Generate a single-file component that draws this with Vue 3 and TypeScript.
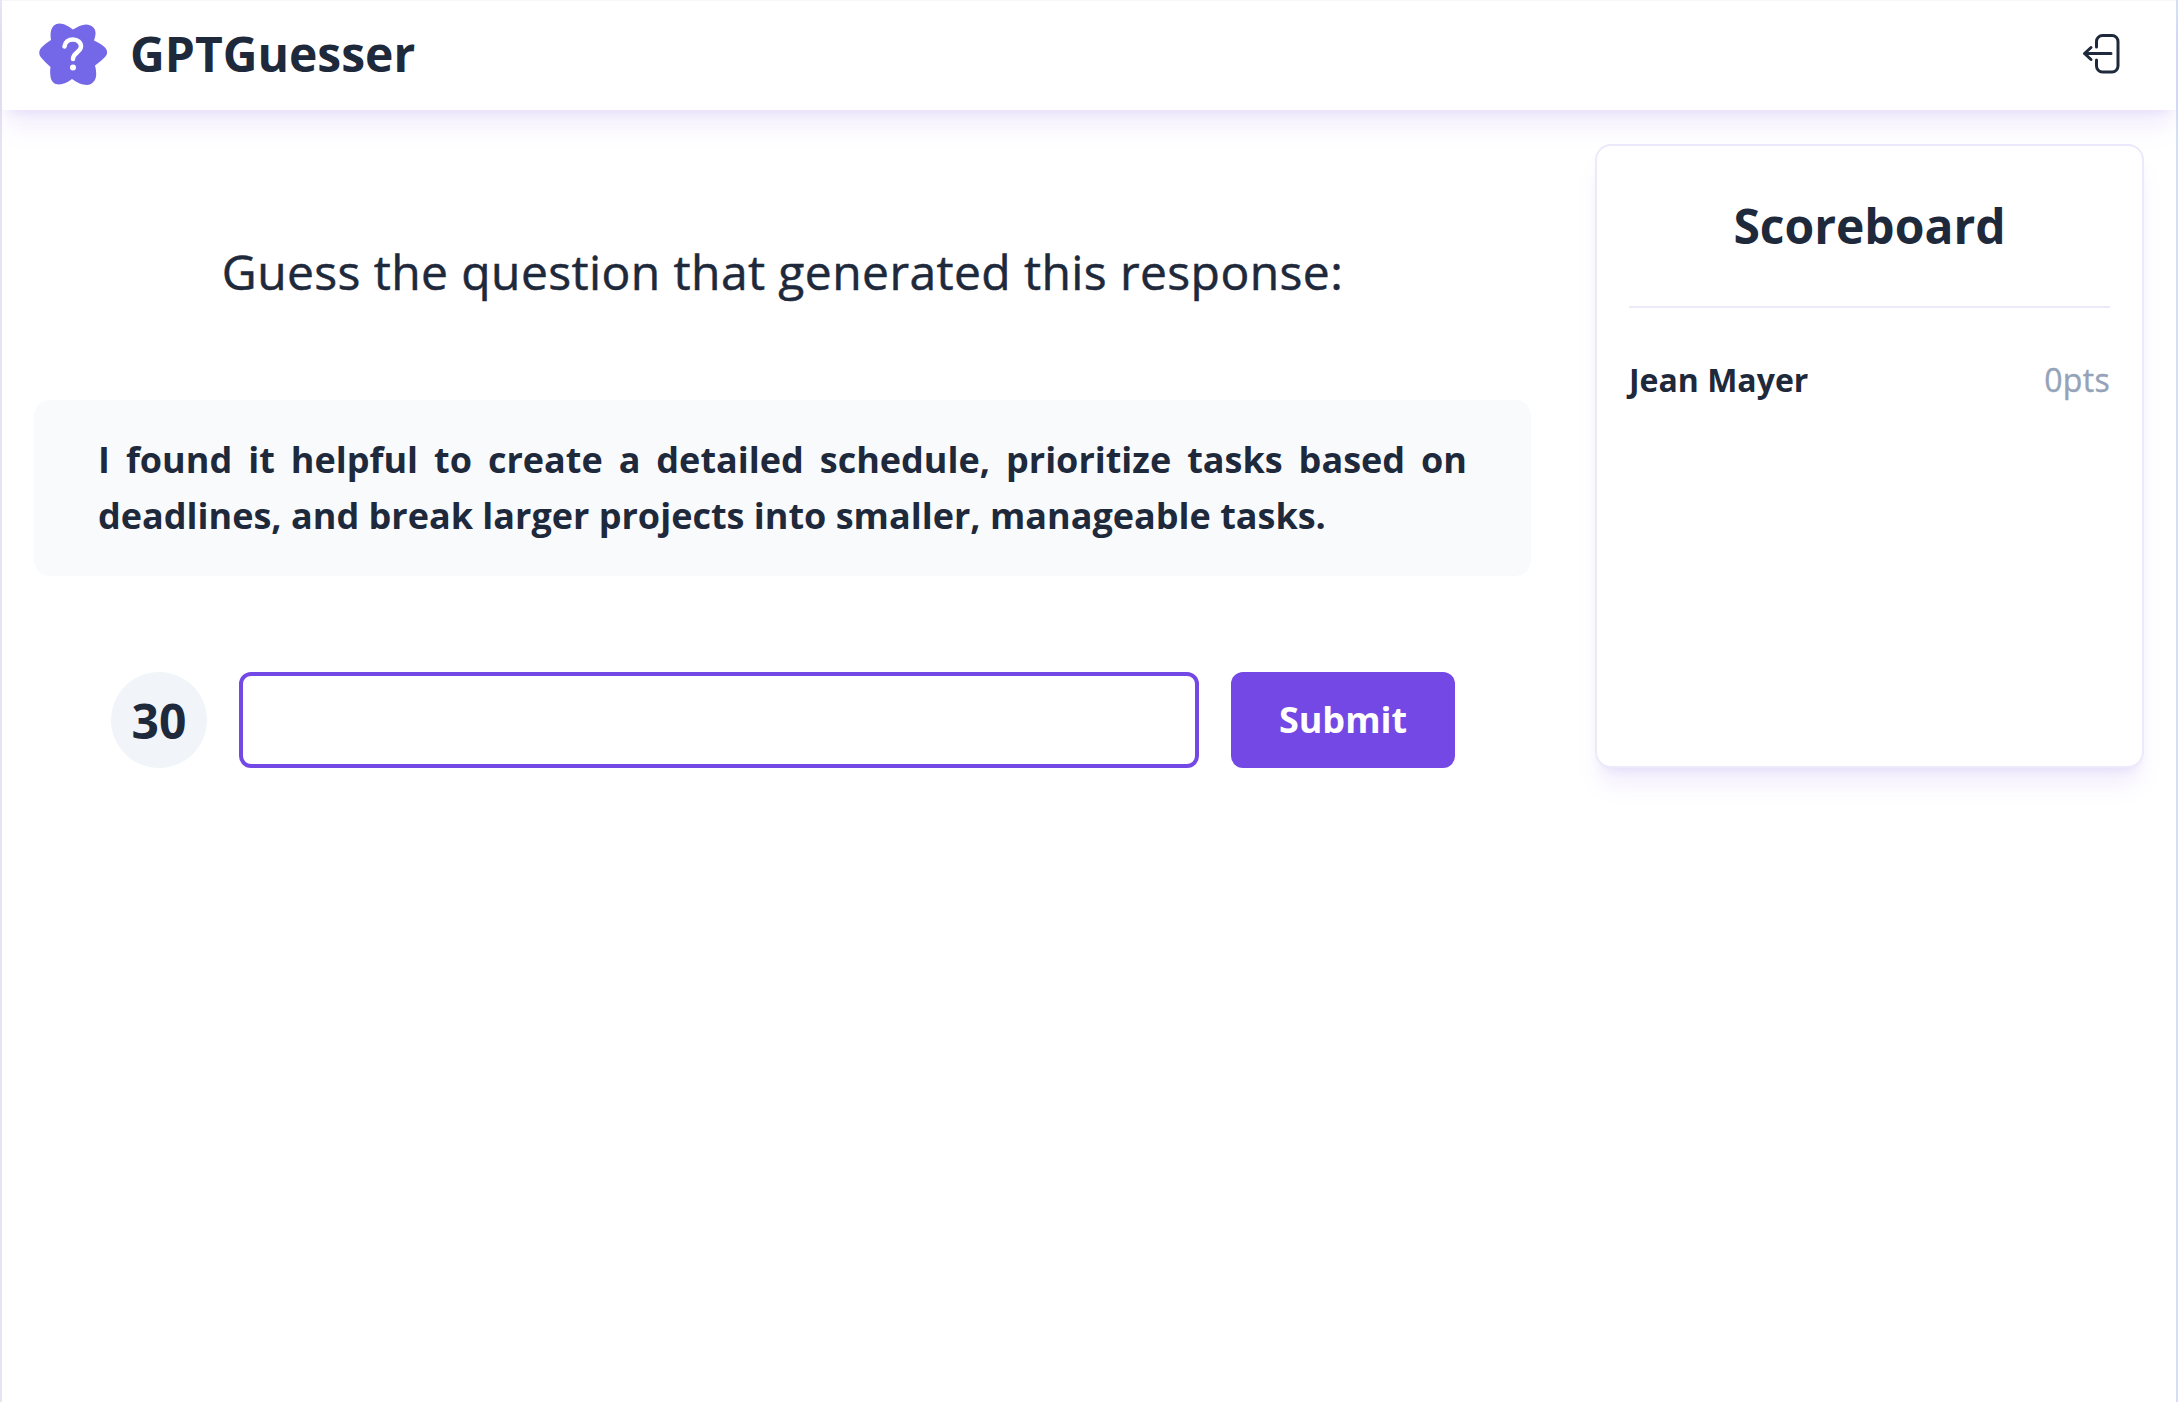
<script setup lang="ts">
const timer = 30
const players = [{ name: 'Jean Mayer', score: 0 }]
</script>

<template>
  <div class="page">
    <header class="topbar">
      <div class="brand">
        <svg class="logo" viewBox="0 0 68 62" aria-hidden="true">
          <path
            fill="#7468e8"
            d="M34 6.500C38 4 43 1.500 47 1.500C53 1.500 57 5.500 56.500 11C56.300 13.500 55.700 15.500 55 17.500C59 19.500 63 21.500 65.500 24C69 27.500 69 31.500 65.500 34.500C63 37 59.500 40 56 42.500C57 46 57.500 50 57 53.500C56 59 52 62 48 62C43 62 37 59 33 56C29 59 24 61.500 20 61.500C15 61.500 12 58 11.500 53.500C11 50 11 47 11.500 44C8 41 5 38 2.500 35C-0.500 32 -0.500 27.500 2.500 24.500C5 22 8.500 19 12 17C11.500 14 11.300 11 12 8C13 3.500 16 0.500 20.500 0.500C25 0.500 30 3.500 34 6.500Z"
          />
          <path
            fill="none"
            stroke="#fff"
            stroke-width="4.500"
            stroke-linecap="round"
            stroke-linejoin="round"
            d="M25.500 23.500C26 19 29.500 16.500 34 16.500C38.500 16.500 42 19.500 42 23.500C42 29 34 29.500 34 36"
          />
          <circle cx="34" cy="44.500" r="3" fill="#fff" />
        </svg>
        <span class="brand-name">GPTGuesser</span>
      </div>
      <button class="logout" type="button" aria-label="Log out">
        <svg viewBox="0 0 40 44" aria-hidden="true">
          <path d="M15.500 15V9.500A6 6 0 0 1 21.500 3.500H31A6 6 0 0 1 37 9.500V34A6 6 0 0 1 31 40H21.500A6 6 0 0 1 15.500 34V28" />
          <path d="M30 21.500H3.500M3.500 21.500L10 15.500M3.500 21.500L10 27.500" />
        </svg>
      </button>
    </header>

    <main class="content">
      <section class="game">
        <h1 class="prompt">Guess the question that generated this response:</h1>
        <p class="response">
          I found it helpful to create a detailed schedule, prioritize tasks based on deadlines, and break larger
          projects into smaller, manageable tasks.
        </p>
        <form class="guess" @submit.prevent>
          <div class="timer">{{ timer }}</div>
          <input class="guess-input" type="text" />
          <button class="submit" type="submit">Submit</button>
        </form>
      </section>

      <aside class="scoreboard">
        <h2 class="scoreboard-title">Scoreboard</h2>
        <ul class="score-list">
          <li v-for="player in players" :key="player.name" class="score-row">
            <span class="player">{{ player.name }}</span>
            <span class="points">{{ player.score }}pts</span>
          </li>
        </ul>
      </aside>
    </main>
  </div>
</template>

<style>
html,
body {
  margin: 0;
  background: #fff;
}
</style>

<style scoped>
.page {
  box-sizing: border-box;
  min-height: 1402px;
  border-left: 2px solid #e6e4f2;
  border-right: 2px solid #d5e0f8;
  font-family: 'Open Sans', sans-serif;
  color: #1e293b;
}

.topbar {
  box-sizing: border-box;
  height: 110px;
  display: flex;
  align-items: center;
  justify-content: space-between;
  padding: 0 55px 4px 37px;
  border-top: 1px solid #f7f7fa;
  background: #fff;
  box-shadow:
    0 20px 25px -5px rgba(116, 72, 228, 0.1),
    0 8px 10px -6px rgba(116, 72, 228, 0.1);
  position: relative;
}

.brand {
  display: flex;
  align-items: center;
  gap: 23px;
}

.logo {
  width: 68px;
  height: 62px;
  display: block;
}

.brand-name {
  font-size: 48px;
  font-weight: 700;
  line-height: 1;
}

.logout {
  width: 40px;
  height: 44px;
  padding: 0;
  border: 0;
  background: none;
}

.logout svg {
  display: block;
  fill: none;
  stroke: #1e293b;
  stroke-width: 3;
  stroke-linecap: round;
  stroke-linejoin: round;
}

.content {
  display: flex;
  align-items: flex-start;
  gap: 64px;
  padding: 34px 32px;
}

.game {
  flex: 1;
  padding-top: 92px;
}

/* only regular and bold are installed, so medium is faked */
.prompt {
  margin: 0 0 92px;
  font-size: 48px;
  font-weight: 400;
  letter-spacing: 0.4px;
  -webkit-text-stroke: 0.5px #1e293b;
  line-height: 72px;
  text-align: center;
}

.response {
  margin: 0 0 96px;
  padding: 32px 64px;
  border-radius: 16px;
  background: #f8fafc;
  font-size: 36px;
  font-weight: 700;
  line-height: 56px;
  text-align: justify;
}

.guess {
  display: flex;
  align-items: center;
  gap: 32px;
  padding: 0 76px 0 77px;
}

.timer {
  flex: none;
  width: 96px;
  height: 96px;
  border-radius: 50%;
  display: flex;
  align-items: center;
  justify-content: center;
  background: #f1f5f9;
  font-size: 48px;
  font-weight: 700;
}

.guess-input {
  flex: 1;
  min-width: 0;
  box-sizing: border-box;
  height: 96px;
  border: 4px solid #7448e4;
  border-radius: 12px;
  outline: none;
  background: #fff;
}

.submit {
  flex: none;
  width: 224px;
  height: 96px;
  padding: 0 0 2px;
  border: 0;
  border-radius: 12px;
  background: #7448e4;
  color: #fff;
  font-family: inherit;
  font-size: 36px;
  font-weight: 700;
}

.scoreboard {
  flex: none;
  box-sizing: border-box;
  width: 549px;
  height: 624px;
  padding: 32px;
  border: 2px solid #ece9fb;
  border-radius: 16px;
  background: #fff;
  box-shadow:
    0 20px 25px -5px rgba(116, 72, 228, 0.1),
    0 8px 10px -6px rgba(116, 72, 228, 0.1);
}

.scoreboard-title {
  margin: 0;
  padding: 12px 0 44px;
  border-bottom: 2px solid #ece9fb;
  font-size: 48px;
  font-weight: 700;
  line-height: 72px;
  text-align: center;
}

.score-list {
  list-style: none;
  margin: 0;
  padding: 48px 0 0;
}

.score-row {
  display: flex;
  justify-content: space-between;
  font-size: 32px;
  line-height: 48px;
}

.player {
  font-weight: 700;
}

.points {
  color: #94a3b8;
  letter-spacing: 0.3px;
  -webkit-text-stroke: 0.4px #94a3b8;
}
</style>
